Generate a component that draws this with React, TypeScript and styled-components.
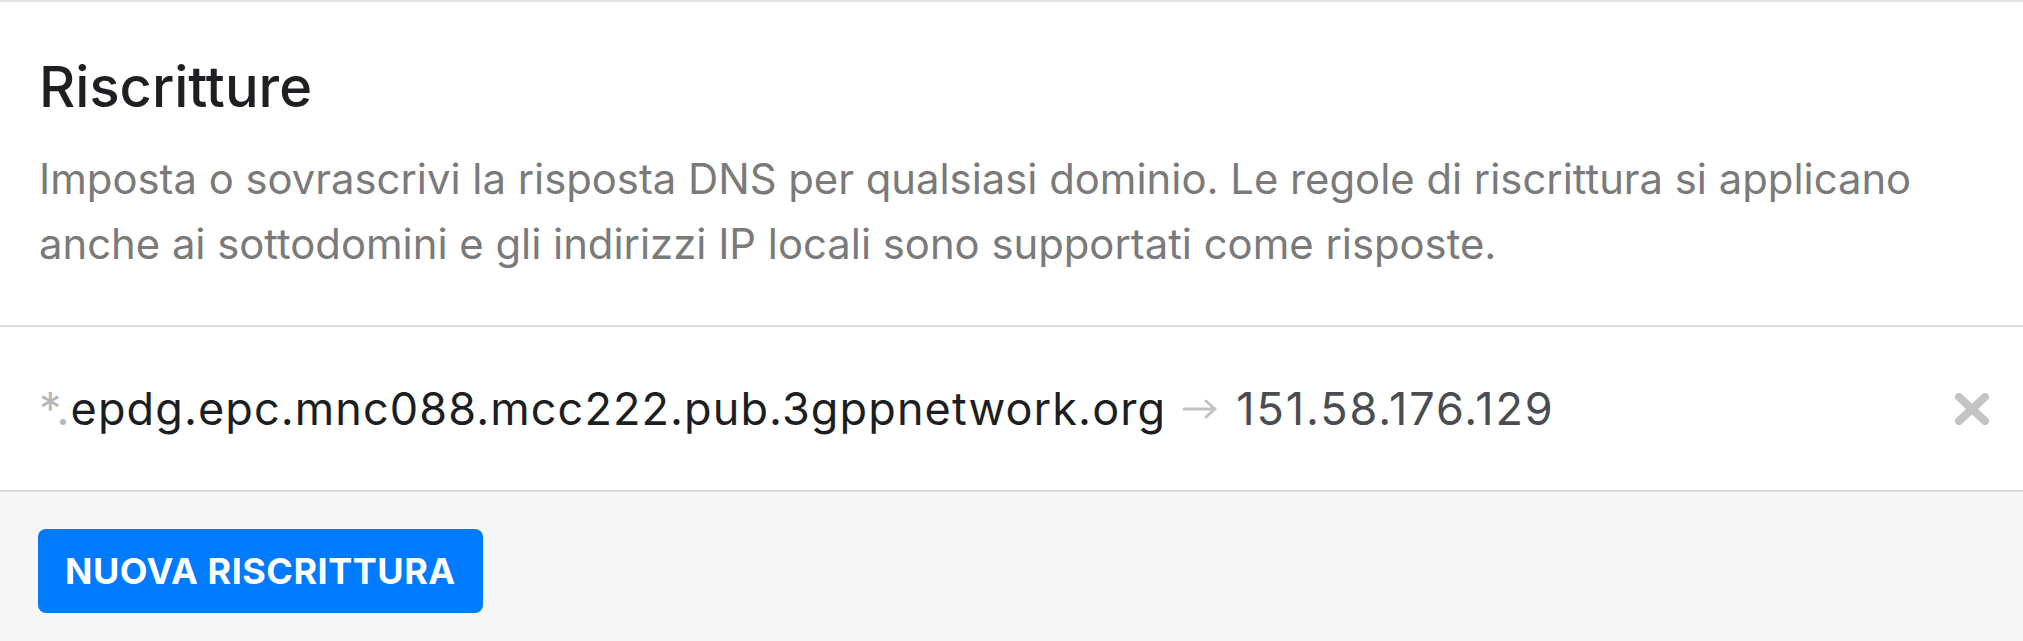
import React from 'react';
import styled, { createGlobalStyle } from 'styled-components';

const GlobalStyle = createGlobalStyle`
  html, body {
    margin: 0;
    padding: 0;
    background: #ffffff;
  }

  body {
    font-family: Inter, 'Noto Sans', 'Liberation Sans', sans-serif;
    -webkit-font-smoothing: antialiased;
  }
`;

const Panel = styled.section`
  border-top: 2px solid #e2e2e2;
  background: #ffffff;
`;

const Header = styled.header`
  padding: 53px 39px 48px;
`;

const Title = styled.h2`
  margin: 0;
  font-size: 56px;
  line-height: 64px;
  font-weight: 500;
  color: #1d1f23;
`;

const Description = styled.p`
  margin: 28px 0 0;
  font-size: 41.8px;
  line-height: 65px;
  font-weight: 400;
  color: #7a7a7a;
  max-width: 1920px;
`;

const RuleList = styled.ul`
  list-style: none;
  margin: 0;
  padding: 0;
  border-top: 2px solid #dcdcdc;
  border-bottom: 2px solid #dcdcdc;
`;

const RuleRow = styled.li`
  display: flex;
  align-items: center;
  height: 163px;
  padding: 0 33px 0 39px;
  font-size: 45px;
`;

const Domain = styled.span`
  color: #1c1e21;
  letter-spacing: 1.1px;
  white-space: nowrap;
`;

const Wildcard = styled.span`
  color: #b8b8b8;
`;

const Arrow = styled.svg`
  flex: none;
  margin: 0 18px 0 16px;
`;

const Answer = styled.span`
  color: #4a4c51;
  letter-spacing: 1.9px;
  white-space: nowrap;
`;

const Spacer = styled.div`
  flex: 1;
`;

const RemoveButton = styled.button`
  display: flex;
  align-items: center;
  justify-content: center;
  padding: 0;
  border: none;
  background: none;
  cursor: pointer;
`;

const Footer = styled.footer`
  background: #f6f6f6;
  padding: 37px 38px 40px;
`;

const PrimaryButton = styled.button`
  height: 84px;
  padding: 0 27px;
  border: none;
  border-radius: 8px;
  background: #007aff;
  color: #ffffff;
  font-family: Inter, 'Noto Sans', 'Liberation Sans', sans-serif;
  font-size: 36px;
  font-weight: 700;
  letter-spacing: 0.5px;
  cursor: pointer;
`;

type Rule = {
  domain: string;
  answer: string;
};

const rules: Rule[] = [
  { domain: 'epdg.epc.mnc088.mcc222.pub.3gppnetwork.org', answer: '151.58.176.129' },
];

export default function App() {
  return (
    <>
      <GlobalStyle />
      <Panel>
        <Header>
          <Title>Riscritture</Title>
          <Description>
            Imposta o sovrascrivi la risposta DNS per qualsiasi dominio. Le regole di riscrittura si applicano
            anche ai sottodomini e gli indirizzi IP locali sono supportati come risposte.
          </Description>
        </Header>
        <RuleList>
          {rules.map((rule) => (
            <RuleRow key={rule.domain}>
              <Domain>
                <Wildcard>*.</Wildcard>
                {rule.domain}
              </Domain>
              <Arrow width="36" height="20" viewBox="0 0 36 20" fill="none">
                <path
                  d="M2 10 H33 M24 2 L33 10 L24 18"
                  stroke="#c2c2c2"
                  strokeWidth="3"
                  strokeLinecap="round"
                  strokeLinejoin="round"
                />
              </Arrow>
              <Answer>{rule.answer}</Answer>
              <Spacer />
              <RemoveButton aria-label="Rimuovi">
                <svg width="36" height="32" viewBox="0 0 36 32" fill="none">
                  <path
                    d="M5 4 L31 28 M31 4 L5 28"
                    stroke="#c4c4c4"
                    strokeWidth="8"
                    strokeLinecap="round"
                  />
                </svg>
              </RemoveButton>
            </RuleRow>
          ))}
        </RuleList>
        <Footer>
          <PrimaryButton>NUOVA RISCRITTURA</PrimaryButton>
        </Footer>
      </Panel>
    </>
  );
}
